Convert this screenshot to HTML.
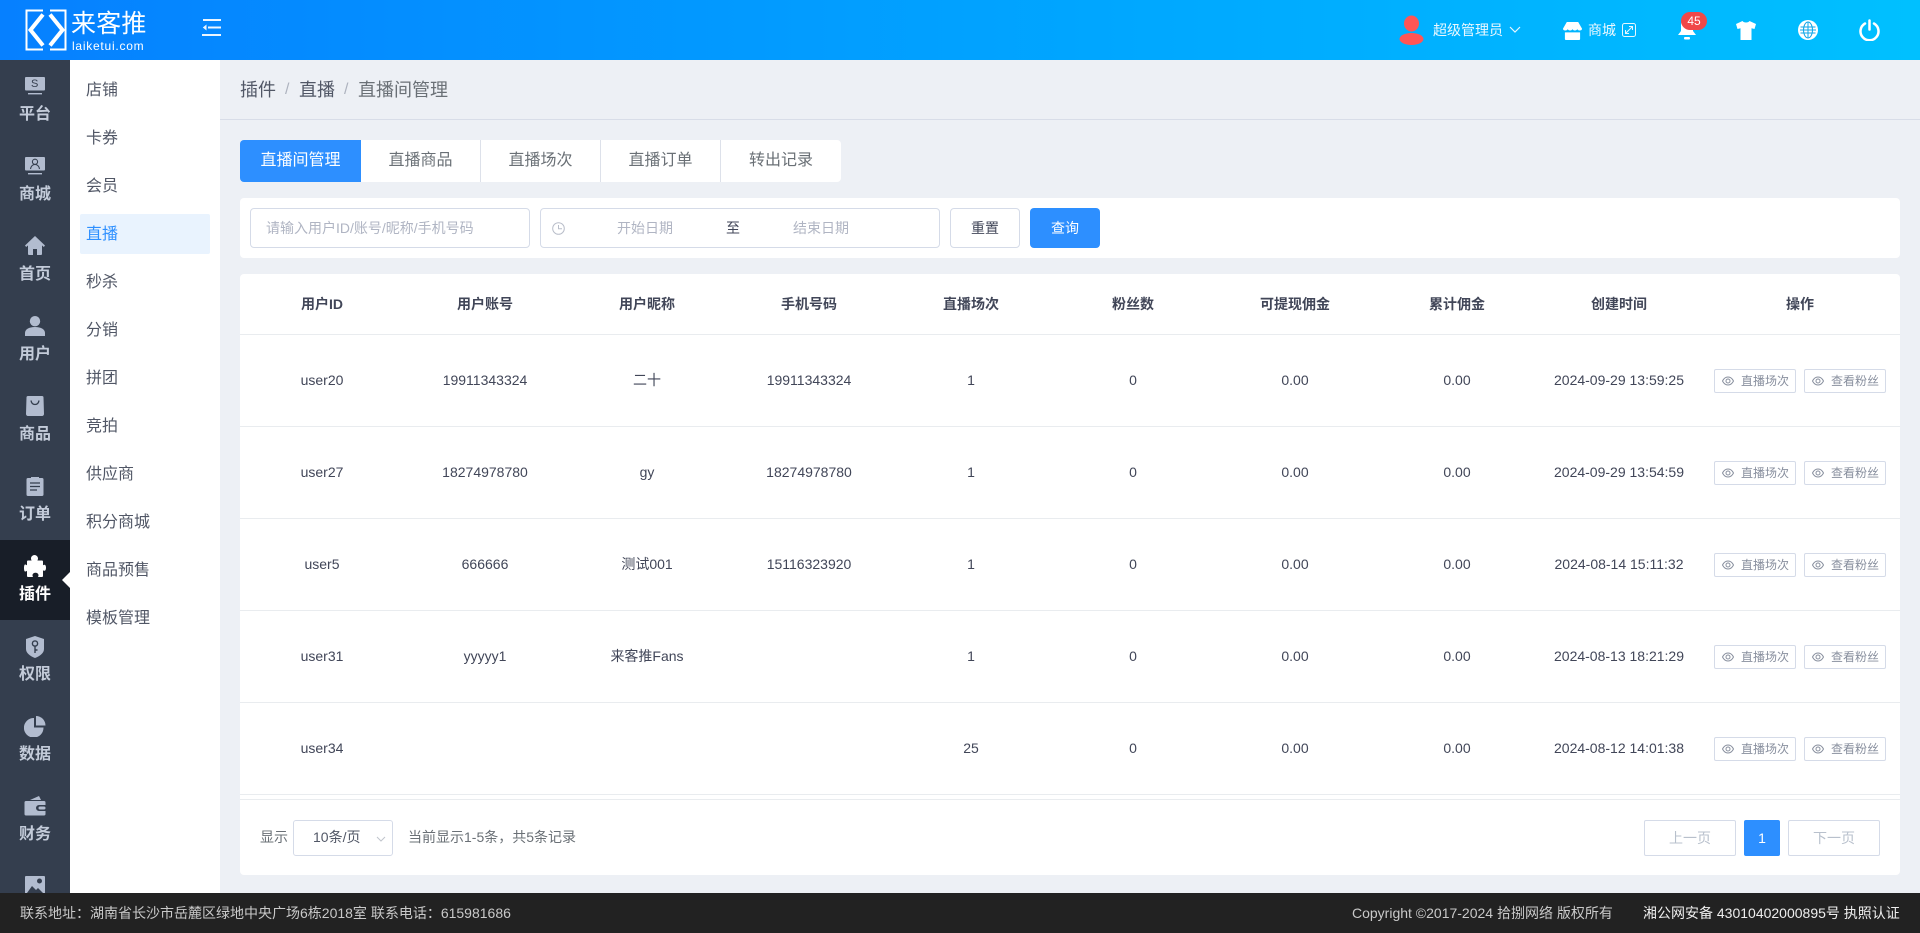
<!DOCTYPE html>
<html lang="zh-CN">
<head>
<meta charset="utf-8">
<title>直播间管理</title>
<style>
*{box-sizing:border-box;margin:0;padding:0}
html,body{width:1920px;height:933px;overflow:hidden;background:#edf0f5;font-family:"Liberation Sans","Noto Sans CJK SC",sans-serif;color:#414658;font-size:14px}
.a{position:absolute}
.t{position:absolute;white-space:nowrap;line-height:20px}
.c{transform:translateX(-50%)}
#hd{left:0;top:0;width:1920px;height:60px;background:linear-gradient(90deg,#0680ff 0%,#00a8ff 60%,#00c0ff 100%);color:#fff}
#sb{left:0;top:60px;width:70px;height:833px;background:#343e4e;overflow:hidden}
.si{position:absolute;left:0;width:70px;height:80px}
.si svg{position:absolute;left:25px;top:16px}
.si span{position:absolute;left:0;width:70px;top:44px;text-align:center;font-size:16px;line-height:22px;font-weight:700;color:#c3cbd9}
.si.on{background:#181e28}
.si.on span{color:#fff}
#sub{left:70px;top:60px;width:150px;height:833px;background:#fff}
.su{position:absolute;left:10px;width:130px;height:40px;line-height:41px;padding-left:6px;font-size:16px;color:#515766;border-radius:2px}
.su.on{background:#e9f3fe;color:#2d8fff;line-height:41px}
.th{font-weight:700;top:294px;color:#414658}
.btn{position:absolute;width:82px;height:24px;border:1px solid #d5dbe8;border-radius:2px;background:#fff;color:#888f9e;font-size:12px;line-height:22px;white-space:nowrap}
.btn svg{position:absolute;left:7px;top:6px}
.btn b{position:absolute;left:26px;top:0;font-weight:400}
.tab{position:absolute;top:140px;height:42px;background:#fff;text-align:center;line-height:41px;font-size:16px;color:#6a7076;border-right:1px solid #dde1ea}
.line{position:absolute;left:240px;width:1660px;height:1px;background:#e9ecef}
</style>
</head>
<body>

<!-- header -->
<div id="hd" class="a">
  <svg class="a" style="left:25px;top:9px" width="42" height="42" viewBox="0 0 42 42" fill="none" stroke="#fff">
    <path d="M18 1.500H1.500V40.500H18M25 40.500H40.500V1.500H25" stroke-width="2"/>
    <path d="M18 5.500L5.500 21L18 36.500M25 5.500L37.500 21L25 36.500" stroke-width="4"/>
  </svg>
  <div class="t" style="left:71px;top:10px;font-size:25px;line-height:28px;font-weight:400;letter-spacing:.2px">来客推</div>
  <div class="t" style="left:72px;top:39px;font-size:12px;line-height:14px;letter-spacing:.75px">laiketui.com</div>
  <svg class="a" style="left:202px;top:19px" width="19" height="17" viewBox="0 0 19 17" fill="#fff" opacity=".92">
    <path d="M1 0h18v2H1zM6 7.500h13v2H6zM0 15h19v2H0zM4.500 5.500v6L.8 8.500z"/>
  </svg>

  <svg class="a" style="left:1398px;top:15px" width="27" height="30" viewBox="0 0 27 30" fill="#ff5555">
    <ellipse cx="13.500" cy="8.500" rx="7.500" ry="8"/><ellipse cx="13.500" cy="24" rx="12" ry="6"/>
  </svg>
  <div class="t" style="left:1433px;top:20px;font-size:14px;color:#eaf8ff">超级管理员</div>
  <svg class="a" style="left:1509px;top:26px" width="12" height="8" viewBox="0 0 12 8" fill="none" stroke="#e6f7ff" stroke-width="1.200"><path d="M1 1l5 5 5-5"/></svg>

  <svg class="a" style="left:1563px;top:21px" width="19" height="19" viewBox="0 0 20 20" fill="#fff">
    <path d="M4 1h12l4 7c0 1.500-1.200 2-2.500 2S15 9.300 15 8.300c0 1-1.200 1.700-2.500 1.700S10 9.300 10 8.300C10 9.300 8.800 10 7.500 10S5 9.300 5 8.300C5 9.300 3.800 10 2.500 10S0 9.500 0 8z"/>
    <path d="M2 12h16v7a1 1 0 0 1-1 1H3a1 1 0 0 1-1-1z"/>
  </svg>
  <div class="t" style="left:1588px;top:20px;font-size:14px;color:#eaf8ff">商城</div>
  <svg class="a" style="left:1622px;top:23px" width="14" height="14" viewBox="0 0 14 14" fill="none" stroke="#e6f7ff" stroke-width="1">
    <rect x=".5" y=".5" width="13" height="13" rx="2"/><path d="M4 10L10 4M7 3.500h3.500V7M3.500 7v3.500H7"/>
  </svg>

  <svg class="a" style="left:1677px;top:17px" width="20" height="24" viewBox="0 0 20 24" fill="#fff">
    <path d="M10 1c4 0 6 3 6 7v6l3 4H1l3-4V8c0-4 2-7 6-7z"/><rect x="7" y="20" width="6" height="2.500" rx="1"/>
  </svg>
  <div class="a" style="left:1681px;top:12px;width:26px;height:18px;border-radius:9px;background:#f04848;color:#fff;font-size:12px;line-height:18px;text-align:center">45</div>

  <svg class="a" style="left:1736px;top:20px" width="20" height="20" viewBox="0 0 20 20" fill="#fff">
    <path d="M6.500 1C7.500 3 12.500 3 13.500 1L20 4l-1.500 5-3-.8V20h-11V8.200l-3 .8L0 4z"/>
  </svg>

  <svg class="a" style="left:1798px;top:20px" width="20" height="20" viewBox="0 0 20 20">
    <circle cx="10" cy="10" r="10" fill="#fff"/>
    <g fill="none" stroke="#0fa6e8" stroke-width="1"><ellipse cx="10" cy="10" rx="4.500" ry="8"/><path d="M10 2v16M2.500 7h15M2.500 13h15M2 10h16"/></g>
  </svg>

  <svg class="a" style="left:1859px;top:19px" width="21" height="22" viewBox="0 0 21 22" fill="none" stroke="#fff" stroke-width="2.500" stroke-linecap="round">
    <path d="M10.500 1.500v9M6 4.500a9 9 0 1 0 9 0"/>
  </svg>
</div>

<!-- main icon sidebar -->
<div id="sb" class="a">
  <div class="si" style="top:0">
    <svg width="20" height="20" viewBox="0 0 20 20" fill="#b2bccf"><rect y="1" width="20" height="13.500" rx="1"/><rect x="3" y="17" width="14" height="1.400"/></svg>
    <div class="t" style="left:31px;top:18px;font-size:11px;line-height:13px;color:#343e4e">S</div>
    <span>平台</span>
  </div>
  <div class="si" style="top:80px">
    <svg width="20" height="20" viewBox="0 0 20 20" fill="#b2bccf"><rect y="1" width="20" height="13.500" rx="1"/><rect x="3" y="17" width="14" height="1.400"/><circle cx="10" cy="5.800" r="2.600" fill="none" stroke="#343e4e" stroke-width="1.100"/><path d="M5.500 13c.6-3 2.400-4.500 4.500-4.500s3.900 1.500 4.500 4.500" fill="none" stroke="#343e4e" stroke-width="1.100"/></svg>
    <span>商城</span>
  </div>
  <div class="si" style="top:160px">
    <svg width="20" height="20" viewBox="0 0 20 20" fill="#b2bccf"><path d="M10 0L20 9.500 18.800 11 17 9.400V18a1 1 0 0 1-1 1h-4v-6H8v6H4a1 1 0 0 1-1-1V9.400L1.200 11 0 9.500z"/></svg>
    <span>首页</span>
  </div>
  <div class="si" style="top:240px">
    <svg width="20" height="20" viewBox="0 0 20 20" fill="#b2bccf"><circle cx="10" cy="5.200" r="5.200"/><path d="M0 20v-3c0-3.500 3.500-6 10-6s10 2.500 10 6v3z"/></svg>
    <span>用户</span>
  </div>
  <div class="si" style="top:320px">
    <svg width="20" height="20" viewBox="0 0 20 20" fill="#b2bccf"><path d="M3 0h14c1 0 1.500.6 1.500 1.500L19 18c0 1-.8 2-2 2H3c-1.200 0-2-1-2-2l.5-16.500C1.500.6 2 0 3 0z"/><path d="M6 4.500c.5 3 2 4 4 4s3.500-1 4-4" fill="none" stroke="#343e4e" stroke-width="1.300"/></svg>
    <span>商品</span>
  </div>
  <div class="si" style="top:400px">
    <svg width="20" height="20" viewBox="0 0 20 20" fill="#b2bccf"><path d="M3 2h3V1h8v1h3c1 0 1.500.6 1.500 1.500v15c0 1-.6 1.500-1.500 1.500H3c-1 0-1.500-.6-1.500-1.500v-15C1.500 2.600 2 2 3 2z"/><path d="M5 7h10M5 10.500h10M5 14h7" stroke="#343e4e" stroke-width="1.300"/></svg>
    <span>订单</span>
  </div>
  <div class="si on" style="top:480px">
    <svg style="left:24px;top:15px" width="22" height="22" viewBox="0 0 22 22" fill="#fff"><path d="M7 3.500C7 1.500 8.800 0 10.500 0S14 1.500 14 3.500c0 .8-.3 1.300-.6 2h4.600a1 1 0 0 1 1 1v3.800c.6-.3 1-.5 1.500-.5 1 0 1.500 1.500 1.500 3s-.5 3-1.500 3c-.5 0-1-.2-1.500-.6V21a1 1 0 0 1-1 1h-4c.3-.6.5-1.200.5-1.800 0-1.400-1.200-2.500-3-2.500s-3 1.100-3 2.500c0 .6.200 1.200.5 1.800H4a1 1 0 0 1-1-1v-5.300c-.7.500-1.300.8-2 .8C.3 16.500 0 14.500 0 13s.3-3.500 1-3.500c.7 0 1.300.3 2 .8V6.500a1 1 0 0 1 1-1h3.600C7.300 4.800 7 4.300 7 3.500z"/></svg>
    <span style="top:44px">插件</span>
    <div class="a" style="left:62px;top:32px;width:0;height:0;border-top:8px solid transparent;border-bottom:8px solid transparent;border-right:8px solid #fff"></div>
  </div>
  <div class="si" style="top:560px">
    <svg style="left:26px;top:16px" width="18" height="22" viewBox="0 0 18 22" fill="#b2bccf"><path d="M9 0l9 3v10c0 4-4 7-9 9-5-2-9-5-9-9V3z"/><circle cx="9" cy="7.500" r="2.600" fill="none" stroke="#343e4e" stroke-width="1.400"/><path d="M9 10v7M9 14h2.500" stroke="#343e4e" stroke-width="1.400" fill="none"/></svg>
    <span>权限</span>
  </div>
  <div class="si" style="top:640px">
    <svg style="left:24px;top:15px" width="22" height="22" viewBox="0 0 22 22" fill="#b2bccf"><path d="M10 3v9.500h9.500A9.800 9.800 0 1 1 10 3z"/><path d="M12 1a9.500 9.500 0 0 1 9.500 9.500H12z"/></svg>
    <span>数据</span>
  </div>
  <div class="si" style="top:720px">
    <svg style="left:24px;top:16px" width="22" height="20" viewBox="0 0 22 20" fill="#b2bccf"><path d="M6 4l9-4 2 4z"/><path d="M2 5h18a1.500 1.500 0 0 1 1.500 1.500V9H15a3 3 0 0 0 0 6h6.500v3a1.500 1.500 0 0 1-1.500 1.500H2A1.500 1.500 0 0 1 .5 18V6.500A1.500 1.500 0 0 1 2 5z"/><rect x="14.500" y="10.500" width="7" height="3" rx="1.500"/></svg>
    <span>财务</span>
  </div>
  <div class="si" style="top:800px">
    <svg width="20" height="20" viewBox="0 0 20 20"><rect width="20" height="20" y="0" fill="#b2bccf" rx="1"/><circle cx="14.500" cy="5" r="2.500" fill="#343e4e"/><path d="M2 17l5-7 4 4 2-2 5 5z" fill="#343e4e"/></svg>
  </div>
</div>

<!-- secondary sidebar -->
<div id="sub" class="a">
  <div class="su" style="top:10px">店铺</div>
  <div class="su" style="top:58px">卡券</div>
  <div class="su" style="top:106px">会员</div>
  <div class="su on" style="top:154px">直播</div>
  <div class="su" style="top:202px">秒杀</div>
  <div class="su" style="top:250px">分销</div>
  <div class="su" style="top:298px">拼团</div>
  <div class="su" style="top:346px">竞拍</div>
  <div class="su" style="top:394px">供应商</div>
  <div class="su" style="top:442px">积分商城</div>
  <div class="su" style="top:490px">商品预售</div>
  <div class="su" style="top:538px">模板管理</div>
</div>

<!-- breadcrumb -->
<div class="a" style="left:220px;top:119px;width:1700px;height:1px;background:#d8dde8"></div>
<div class="t" style="left:240px;top:79px;font-size:18px;line-height:22px;color:#515766">插件</div>
<div class="t" style="left:285px;top:79px;font-size:16px;line-height:22px;color:#aeb3bf">/</div>
<div class="t" style="left:299px;top:79px;font-size:18px;line-height:22px;color:#515766">直播</div>
<div class="t" style="left:344px;top:79px;font-size:16px;line-height:22px;color:#aeb3bf">/</div>
<div class="t" style="left:358px;top:79px;font-size:18px;line-height:22px;color:#6a7076">直播间管理</div>

<!-- tabs -->
<div class="tab" style="left:240px;width:121px;background:#2d8fff;color:#fff;border:0;border-radius:4px 0 0 4px">直播间管理</div>
<div class="tab" style="left:361px;width:120px">直播商品</div>
<div class="tab" style="left:481px;width:120px">直播场次</div>
<div class="tab" style="left:601px;width:120px">直播订单</div>
<div class="tab" style="left:721px;width:120px;border-right:0;border-radius:0 4px 4px 0">转出记录</div>

<!-- filter -->
<div class="a" style="left:240px;top:198px;width:1660px;height:60px;background:#fff;border-radius:4px"></div>
<div class="a" style="left:250px;top:208px;width:280px;height:40px;border:1px solid #d5dbe8;border-radius:4px"></div>
<div class="t" style="left:266px;top:218px;color:#b0b5c3">请输入用户ID/账号/昵称/手机号码</div>
<div class="a" style="left:540px;top:208px;width:400px;height:40px;border:1px solid #d5dbe8;border-radius:4px"></div>
<svg class="a" style="left:552px;top:222px" width="13" height="13" viewBox="0 0 13 13" fill="none" stroke="#b8bdc9" stroke-width="1"><circle cx="6.500" cy="6.500" r="5.800"/><path d="M6.500 3v3.800H10"/></svg>
<div class="t c" style="left:645px;top:218px;color:#b0b5c3">开始日期</div>
<div class="t c" style="left:733px;top:218px;color:#414658">至</div>
<div class="t c" style="left:821px;top:218px;color:#b0b5c3">结束日期</div>
<div class="a" style="left:950px;top:208px;width:70px;height:40px;border:1px solid #d5dbe8;border-radius:4px;background:#fff;text-align:center;line-height:38px;color:#414658">重置</div>
<div class="a" style="left:1030px;top:208px;width:70px;height:40px;border-radius:4px;background:#2d8fff;text-align:center;line-height:41px;color:#fff">查询</div>

<!-- table card -->
<div class="a" style="left:240px;top:274px;width:1660px;height:601px;background:#fff;border-radius:4px"></div>
<div class="t c th" style="left:322px">用户ID</div>
<div class="t c th" style="left:485px">用户账号</div>
<div class="t c th" style="left:647px">用户昵称</div>
<div class="t c th" style="left:809px">手机号码</div>
<div class="t c th" style="left:971px">直播场次</div>
<div class="t c th" style="left:1133px">粉丝数</div>
<div class="t c th" style="left:1295px">可提现佣金</div>
<div class="t c th" style="left:1457px">累计佣金</div>
<div class="t c th" style="left:1619px">创建时间</div>
<div class="t c th" style="left:1800px">操作</div>

<div class="line" style="top:334px"></div>
<div class="line" style="top:426px"></div>
<div class="line" style="top:518px"></div>
<div class="line" style="top:610px"></div>
<div class="line" style="top:702px"></div>
<div class="line" style="top:794px"></div>
<div class="line" style="top:799px"></div>

<!-- row 1 -->
<div class="t c" style="left:322px;top:370px">user20</div>
<div class="t c" style="left:485px;top:370px">19911343324</div>
<div class="t c" style="left:647px;top:370px">二十</div>
<div class="t c" style="left:809px;top:370px">19911343324</div>
<div class="t c" style="left:971px;top:370px">1</div>
<div class="t c" style="left:1133px;top:370px">0</div>
<div class="t c" style="left:1295px;top:370px">0.00</div>
<div class="t c" style="left:1457px;top:370px">0.00</div>
<div class="t c" style="left:1619px;top:370px">2024-09-29 13:59:25</div>
<div class="btn" style="left:1714px;top:369px"><svg width="12" height="10" viewBox="0 0 12 10" fill="none" stroke="#888f9e"><path d="M.5 5C2 2 4 1 6 1s4 1 5.500 4C10 8 8 9 6 9S2 8 .5 5z"/><circle cx="6" cy="5" r="2"/></svg><b>直播场次</b></div>
<div class="btn" style="left:1804px;top:369px"><svg width="12" height="10" viewBox="0 0 12 10" fill="none" stroke="#888f9e"><path d="M.5 5C2 2 4 1 6 1s4 1 5.500 4C10 8 8 9 6 9S2 8 .5 5z"/><circle cx="6" cy="5" r="2"/></svg><b>查看粉丝</b></div>

<!-- row 2 -->
<div class="t c" style="left:322px;top:462px">user27</div>
<div class="t c" style="left:485px;top:462px">18274978780</div>
<div class="t c" style="left:647px;top:462px">gy</div>
<div class="t c" style="left:809px;top:462px">18274978780</div>
<div class="t c" style="left:971px;top:462px">1</div>
<div class="t c" style="left:1133px;top:462px">0</div>
<div class="t c" style="left:1295px;top:462px">0.00</div>
<div class="t c" style="left:1457px;top:462px">0.00</div>
<div class="t c" style="left:1619px;top:462px">2024-09-29 13:54:59</div>
<div class="btn" style="left:1714px;top:461px"><svg width="12" height="10" viewBox="0 0 12 10" fill="none" stroke="#888f9e"><path d="M.5 5C2 2 4 1 6 1s4 1 5.500 4C10 8 8 9 6 9S2 8 .5 5z"/><circle cx="6" cy="5" r="2"/></svg><b>直播场次</b></div>
<div class="btn" style="left:1804px;top:461px"><svg width="12" height="10" viewBox="0 0 12 10" fill="none" stroke="#888f9e"><path d="M.5 5C2 2 4 1 6 1s4 1 5.500 4C10 8 8 9 6 9S2 8 .5 5z"/><circle cx="6" cy="5" r="2"/></svg><b>查看粉丝</b></div>

<!-- row 3 -->
<div class="t c" style="left:322px;top:554px">user5</div>
<div class="t c" style="left:485px;top:554px">666666</div>
<div class="t c" style="left:647px;top:554px">测试001</div>
<div class="t c" style="left:809px;top:554px">15116323920</div>
<div class="t c" style="left:971px;top:554px">1</div>
<div class="t c" style="left:1133px;top:554px">0</div>
<div class="t c" style="left:1295px;top:554px">0.00</div>
<div class="t c" style="left:1457px;top:554px">0.00</div>
<div class="t c" style="left:1619px;top:554px">2024-08-14 15:11:32</div>
<div class="btn" style="left:1714px;top:553px"><svg width="12" height="10" viewBox="0 0 12 10" fill="none" stroke="#888f9e"><path d="M.5 5C2 2 4 1 6 1s4 1 5.500 4C10 8 8 9 6 9S2 8 .5 5z"/><circle cx="6" cy="5" r="2"/></svg><b>直播场次</b></div>
<div class="btn" style="left:1804px;top:553px"><svg width="12" height="10" viewBox="0 0 12 10" fill="none" stroke="#888f9e"><path d="M.5 5C2 2 4 1 6 1s4 1 5.500 4C10 8 8 9 6 9S2 8 .5 5z"/><circle cx="6" cy="5" r="2"/></svg><b>查看粉丝</b></div>

<!-- row 4 -->
<div class="t c" style="left:322px;top:646px">user31</div>
<div class="t c" style="left:485px;top:646px">yyyyy1</div>
<div class="t c" style="left:647px;top:646px">来客推Fans</div>
<div class="t c" style="left:971px;top:646px">1</div>
<div class="t c" style="left:1133px;top:646px">0</div>
<div class="t c" style="left:1295px;top:646px">0.00</div>
<div class="t c" style="left:1457px;top:646px">0.00</div>
<div class="t c" style="left:1619px;top:646px">2024-08-13 18:21:29</div>
<div class="btn" style="left:1714px;top:645px"><svg width="12" height="10" viewBox="0 0 12 10" fill="none" stroke="#888f9e"><path d="M.5 5C2 2 4 1 6 1s4 1 5.500 4C10 8 8 9 6 9S2 8 .5 5z"/><circle cx="6" cy="5" r="2"/></svg><b>直播场次</b></div>
<div class="btn" style="left:1804px;top:645px"><svg width="12" height="10" viewBox="0 0 12 10" fill="none" stroke="#888f9e"><path d="M.5 5C2 2 4 1 6 1s4 1 5.500 4C10 8 8 9 6 9S2 8 .5 5z"/><circle cx="6" cy="5" r="2"/></svg><b>查看粉丝</b></div>

<!-- row 5 -->
<div class="t c" style="left:322px;top:738px">user34</div>
<div class="t c" style="left:971px;top:738px">25</div>
<div class="t c" style="left:1133px;top:738px">0</div>
<div class="t c" style="left:1295px;top:738px">0.00</div>
<div class="t c" style="left:1457px;top:738px">0.00</div>
<div class="t c" style="left:1619px;top:738px">2024-08-12 14:01:38</div>
<div class="btn" style="left:1714px;top:737px"><svg width="12" height="10" viewBox="0 0 12 10" fill="none" stroke="#888f9e"><path d="M.5 5C2 2 4 1 6 1s4 1 5.500 4C10 8 8 9 6 9S2 8 .5 5z"/><circle cx="6" cy="5" r="2"/></svg><b>直播场次</b></div>
<div class="btn" style="left:1804px;top:737px"><svg width="12" height="10" viewBox="0 0 12 10" fill="none" stroke="#888f9e"><path d="M.5 5C2 2 4 1 6 1s4 1 5.500 4C10 8 8 9 6 9S2 8 .5 5z"/><circle cx="6" cy="5" r="2"/></svg><b>查看粉丝</b></div>

<!-- pagination -->
<div class="t" style="left:260px;top:827px;color:#6a7076">显示</div>
<div class="a" style="left:293px;top:820px;width:100px;height:36px;border:1px solid #d5dbe8;border-radius:3px"></div>
<div class="t" style="left:313px;top:827px;color:#515766">10条/页</div>
<svg class="a" style="left:376px;top:836px" width="10" height="7" viewBox="0 0 10 7" fill="none" stroke="#c0c4cc" stroke-width="1"><path d="M1 1l4 4 4-4"/></svg>
<div class="t" style="left:408px;top:827px;color:#6a7076">当前显示1-5条，共5条记录</div>
<div class="a" style="left:1644px;top:820px;width:92px;height:36px;border:1px solid #d5dbe8;border-radius:2px;text-align:center;line-height:34px;color:#b8c0cc">上一页</div>
<div class="a" style="left:1744px;top:820px;width:36px;height:36px;background:#2d8fff;border-radius:2px;text-align:center;line-height:36px;color:#fff">1</div>
<div class="a" style="left:1788px;top:820px;width:92px;height:36px;border:1px solid #d5dbe8;border-radius:2px;text-align:center;line-height:34px;color:#b8c0cc">下一页</div>

<!-- footer -->
<div class="a" style="left:0;top:893px;width:1920px;height:40px;background:#222"></div>
<div class="t" style="left:20px;top:903px;color:#c9c9c9">联系地址：湖南省长沙市岳麓区绿地中央广场6栋2018室 联系电话：615981686</div>
<div class="t" style="left:1352px;top:903px;color:#c9c9c9">Copyright ©2017-2024 拾捌网络 版权所有</div>
<div class="t" style="left:1643px;top:903px;color:#eee">湘公网安备 43010402000895号 执照认证</div>

</body>
</html>
